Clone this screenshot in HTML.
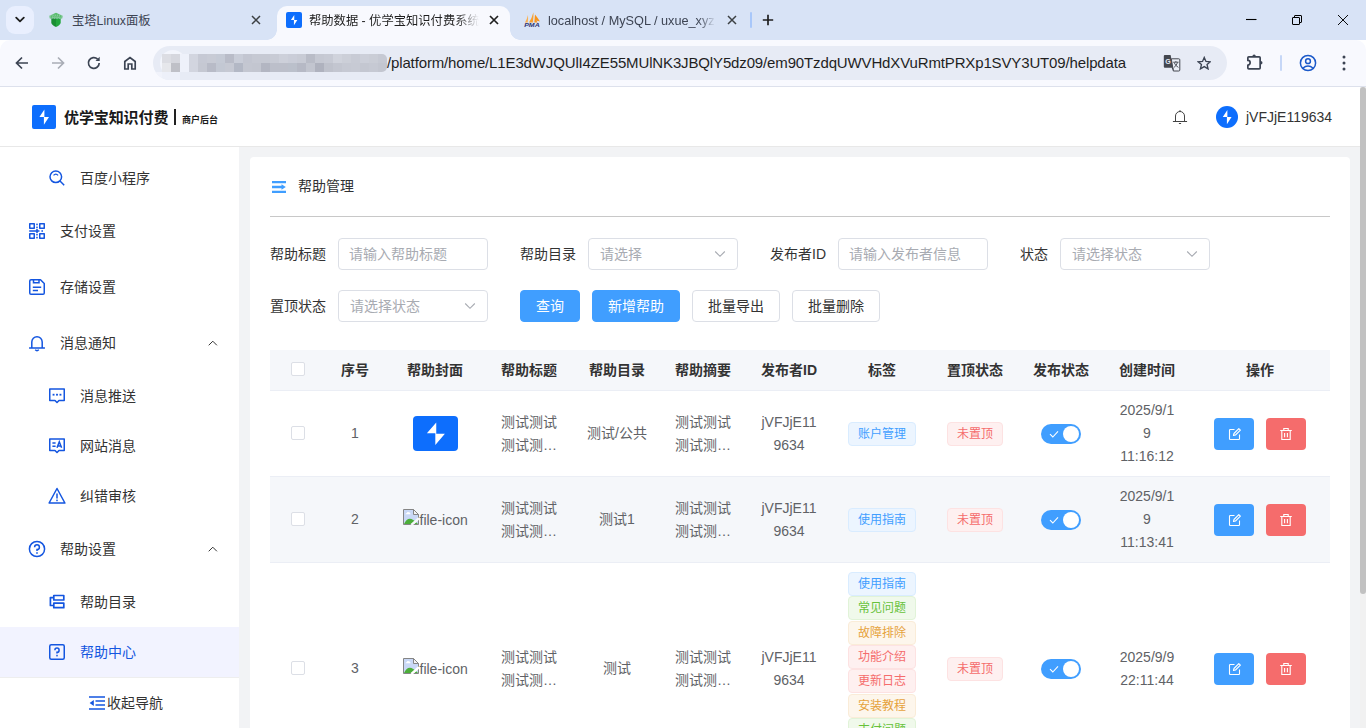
<!DOCTYPE html>
<html lang="zh-CN">
<head>
<meta charset="utf-8">
<title>帮助数据 - 优学宝知识付费系统</title>
<style>
*{box-sizing:border-box;margin:0;padding:0}
html,body{width:1366px;height:728px;overflow:hidden;background:#fff}
body{font-family:"Liberation Sans","Noto Sans CJK SC",sans-serif;font-size:14px;color:#333;position:relative}
.abs{position:absolute}
svg{display:block}

/* ---------- browser chrome ---------- */
#tabbar{position:absolute;left:0;top:0;width:1366px;height:40px;background:#d8e3f6}
#toolbar{position:absolute;left:0;top:40px;width:1366px;height:47px;z-index:2;background:#f8f9fe;border-bottom:1px solid #dde1ec;border-radius:10px 10px 0 0}
.tabtxt{position:absolute;top:12px;font-size:12.3px;line-height:18px;color:#1f1f1f;white-space:nowrap;overflow:hidden}
#tsearch{position:absolute;left:6px;top:6px;width:28px;height:28px;border-radius:9px;background:#e9effe}
#acttab{position:absolute;left:277px;top:6px;width:233px;height:34px;background:#f8f9fe;border-radius:10px 10px 0 0}
#acttab:before,#acttab:after{content:"";position:absolute;bottom:0;width:10px;height:10px}
#acttab:before{left:-10px;background:radial-gradient(circle at 0 0,rgba(0,0,0,0) 9.5px,#f8f9fe 10px)}
#acttab:after{right:-10px;background:radial-gradient(circle at 100% 0,rgba(0,0,0,0) 9.5px,#f8f9fe 10px)}
#omni{position:absolute;left:153px;top:6px;width:1074px;height:34px;border-radius:17px;background:#e7ebf5;overflow:hidden}
#url{position:absolute;left:234px;top:7px;font-size:15px;line-height:20px;color:#1f1f1f;white-space:nowrap;letter-spacing:-0.14px}

/* ---------- page ---------- */
#page{position:absolute;left:0;top:86px;width:1360px;height:642px;background:#f2f3f5;overflow:hidden}
#vscroll{position:absolute;left:1360px;top:86px;width:6px;height:642px;background:#f1f1f1}
#vthumb{position:absolute;left:0;top:1px;width:6px;height:507px;background:#c1c1c1;border-radius:3px}
#header{position:absolute;left:0;top:0;width:1360px;height:61px;background:#fff;border-bottom:1px solid #e8e8e8}
#sidebar{position:absolute;left:0;top:61px;width:239px;height:581px;background:#fff}
.mi{position:absolute;left:0;width:239px;height:50px;font-size:14px;color:#333}
.mi span{position:absolute;top:15px;line-height:20px;white-space:nowrap}
.mi svg{position:absolute}
#card{position:absolute;left:250px;top:71px;width:1100px;height:600px;background:#fff;border-radius:4px}
</style>
</head>
<body>
<div id="tabbar">
  <div id="tsearch"><svg class="abs" style="left:9px;top:10px" width="10" height="8" viewBox="0 0 10 8"><path d="M1.2 1.6 L5 5.4 L8.8 1.6" fill="none" stroke="#1f1f1f" stroke-width="1.8" stroke-linecap="round" stroke-linejoin="round"/></svg></div>
  <!-- tab 1 -->
  <svg class="abs" style="left:48px;top:12px" width="16" height="16" viewBox="0 0 16 16"><path d="M8 0.800 L14.600 3.800 L14.200 6.400 H1.800 L1.400 3.800Z" fill="#58bd6b"/><path d="M2.200 3.200 H13.800 M1.800 5 H14.200" stroke="#d8e3f6" stroke-width="0.500" stroke-dasharray="1.300 0.900" fill="none"/><path d="M3.300 6 H8 V15 Q3.300 12.800 3.300 10.500Z" fill="#1a8f33"/><path d="M8 6 H12.700 V10.500 Q12.700 12.800 8 15Z" fill="#22a73d"/><path d="M3.300 6.600 L4.100 5.800 L4.900 6.600 L5.700 5.800 L6.500 6.600 L7.300 5.800 L8.100 6.600 L8.900 5.800 L9.700 6.600 L10.500 5.800 L11.300 6.600 L12.100 5.800 L12.700 6.600" stroke="#d8e3f6" stroke-width="0.600" fill="none"/></svg>
  <div class="tabtxt" style="left:72px;color:#3d4453">宝塔Linux面板</div>
  <svg class="abs" style="left:251px;top:15px" width="10" height="10" viewBox="0 0 10 10"><path d="M1 1 L9 9 M9 1 L1 9" stroke="#3c4043" stroke-width="1.500" fill="none"/></svg>
  <!-- active tab -->
  <div id="acttab">
    <div class="abs" style="left:9px;top:6px;width:16px;height:16px;border-radius:2px;background:#0d6efd"><svg width="16" height="16" viewBox="0 0 24 24"><path d="M12.400 4.400 L7.400 11.900 H11.900 V19.800 L17 12.100 H12.400Z" fill="#fff"/></svg></div>
    <div class="tabtxt" style="left:32px;top:6px;width:170px;-webkit-mask-image:linear-gradient(90deg,#000 148px,rgba(0,0,0,0) 170px)">帮助数据 - 优学宝知识付费系统</div>
    <svg class="abs" style="left:212px;top:9px" width="10" height="10" viewBox="0 0 10 10"><path d="M1 1 L9 9 M9 1 L1 9" stroke="#1f1f1f" stroke-width="1.700" fill="none"/></svg>
  </div>
  <!-- tab 3 -->
  <svg class="abs" style="left:523px;top:12px" width="18" height="16" viewBox="0 0 18 16"><path d="M5 3 Q4 7 2 10.600 H4.700 Q5.300 6.500 5 3Z" fill="#fbb04f"/><path d="M10.400 0.300 Q9 6 6 10.600 H9.800 Q10.600 5 10.400 0.300Z" fill="#f9a02e"/><path d="M10.900 1.200 V10.600 H11.300 Q11.200 5 10.900 1.200Z" fill="#fbb04f"/><path d="M12 2.500 Q11.800 7 11.400 10.600 H14.600 Q13.800 9.200 13.200 8.600 Q15 9 17 9.600 Q14.500 5.500 12 2.500Z" fill="#f8931a"/><text x="1.200" y="15.100" font-family="Liberation Sans,sans-serif" font-size="6" font-weight="bold" font-style="italic" textLength="15.500" lengthAdjust="spacingAndGlyphs" fill="#2f3572">PMA</text></svg>
  <div class="tabtxt" style="left:548px;color:#3d4453;font-size:12.7px;width:168px;-webkit-mask-image:linear-gradient(90deg,#000 150px,rgba(0,0,0,0) 168px)">localhost / MySQL / uxue_xyz</div>
  <svg class="abs" style="left:727px;top:15px" width="10" height="10" viewBox="0 0 10 10"><path d="M1 1 L9 9 M9 1 L1 9" stroke="#3c4043" stroke-width="1.500" fill="none"/></svg>
  <div class="abs" style="left:750px;top:12px;width:2px;height:16px;background:#a8c7fa;border-radius:1px"></div>
  <svg class="abs" style="left:762px;top:14px" width="12" height="12" viewBox="0 0 12 12"><path d="M6 0.800 V11.200 M0.800 6 H11.200" stroke="#1f1f1f" stroke-width="1.700" fill="none"/></svg>
  <!-- window controls -->
  <svg class="abs" style="left:1246px;top:14px" width="12" height="12" viewBox="0 0 12 12"><path d="M0 5.500 H10.500" stroke="#000" stroke-width="1.100" fill="none"/></svg>
  <svg class="abs" style="left:1291px;top:14px" width="12" height="12" viewBox="0 0 12 12"><rect x="1.500" y="3.500" width="7" height="7" rx="0.400" fill="none" stroke="#000" stroke-width="1"/><path d="M3.500 3.400 V2 Q3.500 1.500 4 1.500 H10 Q10.500 1.500 10.500 2 V8 Q10.500 8.500 10 8.500 H8.600" fill="none" stroke="#000" stroke-width="1"/></svg>
  <svg class="abs" style="left:1337px;top:14px" width="12" height="12" viewBox="0 0 12 12"><path d="M1 1 L11 11 M11 1 L1 11" stroke="#000" stroke-width="0.950" fill="none"/></svg>
</div>

<div id="toolbar">
  <svg class="abs" style="left:14px;top:15px" width="16" height="16" viewBox="0 0 16 16"><path d="M14 8 H3 M8 2.500 L2.500 8 L8 13.500" fill="none" stroke="#3c4453" stroke-width="1.700"/></svg>
  <svg class="abs" style="left:50px;top:15px" width="16" height="16" viewBox="0 0 16 16"><path d="M2 8 H13 M8 2.500 L13.500 8 L8 13.500" fill="none" stroke="#a9adb6" stroke-width="1.700"/></svg>
  <svg class="abs" style="left:86px;top:15px" width="16" height="16" viewBox="0 0 16 16"><path d="M13.200 8 A5.400 5.400 0 1 1 11.600 4.100" fill="none" stroke="#3c4453" stroke-width="1.700"/><path d="M13.700 1.800 V6 H9.500Z" fill="#3c4453"/></svg>
  <svg class="abs" style="left:122px;top:15px" width="16" height="16" viewBox="0 0 16 16"><path d="M2.800 14 V6.500 L8 2.500 L13.200 6.500 V14 H9.800 V9 H6.200 V14Z" fill="none" stroke="#3c4453" stroke-width="1.700" stroke-linejoin="miter"/></svg>
  <div id="omni">
    <div class="abs" style="left:7px;top:4px;width:26px;height:26px;border-radius:13px;background:#f3f5fc"></div><div class="abs" style="left:0;top:26px;width:9px;height:9px;background:#f1f3fb"></div><div class="abs" style="left:9px;top:26px;width:18px;height:9px;background:#edf0f9"></div><div class="abs" style="left:27px;top:26px;width:9px;height:9px;background:#e7ebf5"></div><div class="abs" style="left:9px;top:8px;width:225px;height:18px;border-radius:0 5px 5px 0;overflow:hidden"><div style="height:9px;background:linear-gradient(90deg,#dcdde3 0px 9px,#d6d7de 9px 18px,#eef1fa 18px 27px,#d2d5df 27px 36px,#c6c9d4 36px 45px,#c8cbd5 45px 54px,#c5cad5 54px 63px,#b9bcc8 63px 72px,#c9cdd8 72px 81px,#c3c6d1 81px 90px,#c6c9d3 90px 99px,#c6c9d3 99px 108px,#c8cbd5 108px 117px,#cdd0da 117px 126px,#cacdd8 126px 135px,#c8cbd5 135px 144px,#b9bcc7 144px 153px,#c5c8d2 153px 162px,#c7cad4 162px 171px,#d0d3dc 171px 180px,#cccfd8 180px 189px,#c8cbd5 189px 198px,#cccfd9 198px 207px,#cacdd6 207px 216px,#c6c9d3 216px 225px)"></div><div style="height:9px;background:linear-gradient(90deg,#e6e7eb 0px 9px,#bfc0c7 9px 18px,#eef1fa 18px 27px,#d2d5df 27px 36px,#c5c8d2 36px 45px,#b8bbc7 45px 54px,#c3c8d3 54px 63px,#c6c9d3 63px 72px,#b3b8c5 72px 81px,#c4c7d1 81px 90px,#c3c6d0 90px 99px,#b3b6c2 99px 108px,#bcbfca 108px 117px,#bcbfca 117px 126px,#bbc0cb 126px 135px,#b6b9c5 135px 144px,#c2c5cf 144px 153px,#afb2be 153px 162px,#bfc2cc 162px 171px,#c3c6d0 171px 180px,#c6c9d3 180px 189px,#c7cad4 189px 198px,#c4c7d1 198px 207px,#c6c9d3 207px 216px,#c3c6d0 216px 225px)"></div></div>
    <div id="url">/platform/home/L1E3dWJQUlI4ZE55MUlNK3JBQlY5dz09/em90TzdqUWVHdXVuRmtPRXp1SVY3UT09/helpdata</div>
    <!-- translate icon -->
    <svg class="abs" style="left:1010px;top:8px" width="18" height="18" viewBox="0 0 18 18"><path d="M0.800 2 Q0.800 1 1.800 1 H7.600 L10.200 13.800 H1.800 Q0.800 13.800 0.800 12.800Z" fill="#44474f"/><path d="M8.300 4.800 H15.800 Q16.800 4.800 16.800 5.800 V16 Q16.800 17 15.800 17 H10.300Z" fill="#eceff7" stroke="#44474f" stroke-width="1"/><path d="M8.600 13.800 L10.600 17 L10.300 13.800Z" fill="#44474f"/><text x="5" y="10" font-family="Liberation Sans,sans-serif" font-size="7" font-weight="bold" text-anchor="middle" fill="#e4e8f3">G</text><path d="M10.300 8.200 H15.600 M12.900 7 V8.200 M11 8.400 Q12.400 11.800 15.400 13.400 M14.600 8.400 Q13.400 11.800 10.800 13.600" stroke="#44474f" stroke-width="0.900" fill="none"/></svg>
    <!-- star -->
    <svg class="abs" style="left:1043.800px;top:9.800px" width="14.500" height="14.500" viewBox="0 0 16 16"><path d="M8 1.600 L9.900 6 L14.700 6.400 L11.100 9.500 L12.200 14.200 L8 11.700 L3.800 14.200 L4.900 9.500 L1.300 6.400 L6.100 6Z" fill="none" stroke="#3c4453" stroke-width="1.500" stroke-linejoin="miter"/></svg>
  </div>
  <!-- extensions -->
  <svg class="abs" style="left:1246px;top:13px" width="18" height="18" viewBox="0 0 18 18"><path d="M1.850 4.800 Q1.850 3.850 2.800 3.850 H13.200 Q14.150 3.850 14.150 4.800 V14.900 Q14.150 15.850 13.200 15.850 H2.800 Q1.850 15.850 1.850 14.900 V12 A2.300 2.300 0 0 0 1.850 7.400Z" fill="none" stroke="#3c4453" stroke-width="1.700" stroke-linejoin="round"/><path d="M6.400 3.200 A1.700 1.700 0 0 1 9.800 3.200Z M14.800 8.100 A1.700 1.700 0 0 1 14.800 11.500Z" fill="#3c4453"/></svg>
  <div class="abs" style="left:1280px;top:15px;width:2px;height:16px;background:#c6d7f7;border-radius:1px"></div>
  <!-- profile -->
  <svg class="abs" style="left:1299px;top:14px" width="18" height="18" viewBox="0 0 18 18"><circle cx="9" cy="9" r="7.600" fill="none" stroke="#1b59c9" stroke-width="1.500"/><circle cx="9" cy="7.200" r="2.400" fill="none" stroke="#1b59c9" stroke-width="1.500"/><path d="M3.800 14.300 Q9 9.800 14.200 14.300" fill="none" stroke="#1b59c9" stroke-width="1.500"/></svg>
  <svg class="abs" style="left:1341px;top:14px" width="6" height="18" viewBox="0 0 6 18"><circle cx="3" cy="3" r="1.500" fill="#3c4453"/><circle cx="3" cy="9" r="1.500" fill="#3c4453"/><circle cx="3" cy="15" r="1.500" fill="#3c4453"/></svg>
</div>

<div id="page">
<div id="header">
  <div class="abs" style="left:32px;top:19px;width:24px;height:24px;border-radius:2px;background:#0d6efd"><svg width="24" height="24" viewBox="0 0 24 24"><path d="M12.400 4.400 L7.400 11.900 H11.900 V19.800 L17 12.100 H12.400Z" fill="#fff"/></svg></div>
  <div class="abs" style="left:64px;top:21px;font-size:15px;line-height:22px;font-weight:bold;color:#1a1a1a;white-space:nowrap;letter-spacing:-0.1px">优学宝知识付费</div>
  <div class="abs" style="left:174px;top:23px;width:2px;height:16px;background:#222"></div>
  <div class="abs" style="left:182px;top:28px;font-size:9px;line-height:12px;font-weight:bold;color:#1a1a1a;white-space:nowrap">商户后台</div>
  <svg class="abs" style="left:1172px;top:23px" width="16" height="16" viewBox="0 0 16 16"><path d="M1.300 12.500 H14.700 M3.500 12.500 V7 A4.500 4.500 0 0 1 12.500 7 V12.500 M7.300 14.500 H8.700" fill="none" stroke="#444" stroke-width="1" stroke-linecap="round"/><circle cx="8" cy="2" r="0.800" fill="#444"/></svg>
  <div class="abs" style="left:1216px;top:20px;width:22px;height:22px;border-radius:11px;background:#0d6efd"><svg width="22" height="22" viewBox="0 0 24 24"><path d="M12.400 4.400 L7.400 11.900 H11.900 V19.800 L17 12.100 H12.400Z" fill="#fff"/></svg></div>
  <div class="abs" style="left:1246px;top:21px;font-size:14px;line-height:20px;color:#333;white-space:nowrap">jVFJjE119634</div>
</div>

<div id="sidebar">
  <div class="mi" style="top:6px"><svg style="left:49px;top:17px" width="16" height="16" viewBox="0 0 16 16"><circle cx="6.800" cy="6.800" r="5.800" fill="none" stroke="#1456e0" stroke-width="1.500"/><path d="M11 11 L15.200 15.200" stroke="#1456e0" stroke-width="1.500" fill="none"/><path d="M4.500 5.400 Q6.800 2.800 9.100 5.400" stroke="#1456e0" stroke-width="1.300" fill="none"/></svg><span style="left:80px">百度小程序</span></div>
  <div class="mi" style="top:56px;height:56px"><svg style="left:29px;top:20px" width="16" height="16" viewBox="0 0 16 16"><g fill="none" stroke="#1456e0" stroke-width="1.500" stroke-linejoin="round"><rect x="0.750" y="0.750" width="4.500" height="4.500"/><rect x="10.750" y="0.750" width="4.500" height="4.500"/><rect x="0.750" y="10.750" width="4.500" height="4.500"/><rect x="10.750" y="10.750" width="4.500" height="4.500"/></g><g fill="#1456e0"><rect x="7.250" y="0.600" width="1.500" height="1.600"/><rect x="7.250" y="3.600" width="1.500" height="1.600"/><rect x="0.200" y="7.250" width="10.300" height="1.500"/><rect x="7.250" y="6" width="1.500" height="4"/><rect x="12.400" y="7.250" width="1.600" height="1.500"/><rect x="7.250" y="10.800" width="1.500" height="1.600"/><rect x="7.250" y="13.800" width="1.500" height="1.600"/></g></svg><span style="left:60px;top:18px">支付设置</span></div>
  <div class="mi" style="top:112px;height:56px"><svg style="left:29px;top:20px" width="16" height="16" viewBox="0 0 16 16"><path d="M0.750 2 Q0.750 0.750 2 0.750 H11.500 L15.250 4.500 V14 Q15.250 15.250 14 15.250 H2 Q0.750 15.250 0.750 14Z" fill="none" stroke="#1456e0" stroke-width="1.500" stroke-linejoin="round"/><path d="M4.500 0.750 V3.700 H10 V0.750" fill="none" stroke="#1456e0" stroke-width="1.500"/><path d="M3.800 8.200 H12.200 M3.800 11.500 H9" stroke="#1456e0" stroke-width="1.500" fill="none"/></svg><span style="left:60px;top:18px">存储设置</span></div>
  <div class="mi" style="top:168px;height:56px"><svg style="left:29px;top:20px" width="16" height="17" viewBox="0 0 16 17"><path d="M0.500 13 H15.500 M2.800 13 V7 A5.200 5.200 0 0 1 13.200 7 V13" fill="none" stroke="#1456e0" stroke-width="1.500" stroke-linecap="round"/><path d="M6.200 14.800 Q8 16.600 9.800 14.800" fill="none" stroke="#1456e0" stroke-width="1.400"/></svg><span style="left:60px;top:18px">消息通知</span><svg style="left:207px;top:24px" width="11" height="8" viewBox="0 0 11 8"><path d="M1.700 6.300 L5.800 2.200 L9.900 6.300" fill="none" stroke="#333" stroke-width="1"/></svg></div>
  <div class="mi" style="top:224px"><svg style="left:49px;top:17px" width="16" height="16" viewBox="0 0 16 16"><path d="M0.750 1 H15.250 V12.400 H10 L8 14.500 L6 12.400 H0.750Z" fill="none" stroke="#1456e0" stroke-width="1.500" stroke-linejoin="round"/><g fill="#1456e0"><rect x="3.600" y="5.800" width="1.900" height="1.800"/><rect x="7.050" y="5.800" width="1.900" height="1.800"/><rect x="10.500" y="5.800" width="1.900" height="1.800"/></g></svg><span style="left:80px">消息推送</span></div>
  <div class="mi" style="top:274px"><svg style="left:49px;top:17px" width="16" height="16" viewBox="0 0 16 16"><path d="M0.750 1 H15.250 V12.400 H10 L8 14.500 L6 12.400 H0.750Z" fill="none" stroke="#1456e0" stroke-width="1.500" stroke-linejoin="round"/><path d="M8 9.800 L10.300 3.800 L12.600 9.800 M8.800 8 H11.800" fill="none" stroke="#1456e0" stroke-width="1.500"/><path d="M3.400 5 H6.600 M3.400 8.200 H6.600" stroke="#1456e0" stroke-width="1.500" fill="none"/></svg><span style="left:80px">网站消息</span></div>
  <div class="mi" style="top:324px"><svg style="left:48px;top:16px" width="18" height="18" viewBox="0 0 18 18"><path d="M9 1.500 L16.900 16 H1.100Z" fill="none" stroke="#1456e0" stroke-width="1.500" stroke-linejoin="round"/><path d="M9 6.400 V11.400" stroke="#1456e0" stroke-width="1.500" fill="none"/><rect x="8.250" y="12.600" width="1.500" height="1.600" fill="#1456e0"/></svg><span style="left:80px">纠错审核</span></div>
  <div class="mi" style="top:374px;height:56px"><svg style="left:28px;top:19px" width="18" height="18" viewBox="0 0 18 18"><circle cx="9" cy="9" r="7.600" fill="none" stroke="#1456e0" stroke-width="1.500"/><path d="M6.600 7.200 A2.400 2.400 0 1 1 9 9.600 V11" fill="none" stroke="#1456e0" stroke-width="1.500"/><rect x="8.250" y="12.200" width="1.500" height="1.600" fill="#1456e0"/></svg><span style="left:60px;top:18px">帮助设置</span><svg style="left:207px;top:24px" width="11" height="8" viewBox="0 0 11 8"><path d="M1.700 6.300 L5.800 2.200 L9.900 6.300" fill="none" stroke="#333" stroke-width="1"/></svg></div>
  <div class="mi" style="top:430px"><svg style="left:49px;top:17px" width="16" height="16" viewBox="0 0 16 16"><path d="M4.800 1.500 H14.800 V6 H4.800Z M4.800 9.200 H14.800 V13.700 H4.800Z" fill="none" stroke="#1456e0" stroke-width="1.700" stroke-linejoin="round"/><path d="M4.800 3.600 H1.400 V11.500 H4.800" fill="none" stroke="#1456e0" stroke-width="1.700" stroke-linejoin="round"/></svg><span style="left:80px">帮助目录</span></div>
  <div class="mi" style="top:480px;background:#f2f3ff;color:#1456e0"><svg style="left:49px;top:17px" width="16" height="16" viewBox="0 0 16 16"><rect x="0.750" y="0.750" width="14.500" height="14.500" rx="1.500" fill="none" stroke="#1456e0" stroke-width="1.500"/><path d="M5.900 6.200 A2.100 2.100 0 1 1 8 8.300 V9.600" fill="none" stroke="#1456e0" stroke-width="1.500"/><rect x="7.250" y="10.800" width="1.500" height="1.600" fill="#1456e0"/></svg><span style="left:80px">帮助中心</span></div>
  <div class="abs" style="left:0;top:530px;width:239px;height:51px;background:#fff;border-top:1px solid #eee"><svg class="abs" style="left:89px;top:18px" width="16" height="14" viewBox="0 0 16 14"><path d="M0 1 H16 M6.500 5 H16 M6.500 9 H16 M0 13 H16" stroke="#1456e0" stroke-width="1.600" fill="none"/><path d="M4.800 4 V10 L0.600 7Z" fill="#1456e0"/></svg><span class="abs" style="left:107px;top:15px;line-height:20px;font-size:14px;color:#333;white-space:nowrap">收起导航</span></div>
</div>

<style>
#card .lbl{position:absolute;font-size:14px;line-height:20px;color:#333;white-space:nowrap}
#card .inp{position:absolute;width:150px;height:32px;border:1px solid #dcdfe6;border-radius:4px;background:#fff;font-size:14px;line-height:30px;color:#a8abb2;padding-left:11px;white-space:nowrap}
#card .inp svg{position:absolute;right:11px;top:11px}
#card .btn{position:absolute;height:32px;border-radius:4px;font-size:14px;line-height:30px;text-align:center;white-space:nowrap}
#card .bp{background:#409eff;border:1px solid #409eff;color:#fff}
#card .bd{background:#fff;border:1px solid #dcdfe6;color:#333}
#tbl{position:absolute;left:20px;top:193px;width:1060px;height:420px;overflow:hidden}
#tbl .th{position:absolute;top:10px;font-size:14px;line-height:20px;font-weight:bold;color:#333;white-space:nowrap;transform:translateX(-50%)}
#tbl .row{position:absolute;left:0;width:1060px;border-bottom:1px solid #ebeef5}
#tbl .c{position:absolute;font-size:14px;line-height:23px;color:#606266;white-space:nowrap;text-align:center;transform:translateX(-50%)}
#tbl .cb{position:absolute;left:21px;width:14px;height:14px;border:1px solid #dcdfe6;border-radius:2px;background:#fff}
#tbl .tag{position:absolute;height:24px;border-radius:4px;font-size:12px;line-height:22px;padding:0 9px;white-space:nowrap;border:1px solid}
.t-p{background:#ecf5ff;border-color:#d9ecff!important;color:#409eff}
.t-s{background:#f0f9eb;border-color:#e1f3d8!important;color:#67c23a}
.t-w{background:#fdf6ec;border-color:#faecd8!important;color:#e6a23c}
.t-d{background:#fef0f0;border-color:#fde2e2!important;color:#f56c6c}
#tbl .sw{position:absolute;left:771px;width:40px;height:20px;border-radius:10px;background:#409eff}
#tbl .sw i{position:absolute;left:22px;top:2px;width:16px;height:16px;border-radius:8px;background:#fff}
#tbl .sw svg{position:absolute;left:8px;top:5px}
#tbl .ab{position:absolute;width:40px;height:32px;border-radius:4px}
#tbl .ab svg{position:absolute;left:13px;top:9px}
#tbl .broken{position:absolute;left:133px;font-size:14px;line-height:16px;color:#606266;white-space:nowrap}
#tbl .broken svg{position:absolute;left:0;top:0}
#tbl .broken span{padding-left:16.5px;position:relative;top:3px}
</style>
<div id="card">
<svg class="abs" style="left:22px;top:24px" width="14" height="12" viewBox="0 0 14 12"><path d="M0 1.150 H14 M0 6 H10 M0 10.850 H14" stroke="#409eff" stroke-width="2.300" fill="none"/><path d="M9.500 3.300 L13.800 6 L9.500 8.700Z" fill="#409eff"/></svg>
<div class="lbl" style="left:48px;top:19px;color:#303133">帮助管理</div>
<div class="abs" style="left:20px;top:59px;width:1060px;height:1px;background:#c8c8c8"></div>
<div class="lbl" style="left:20px;top:87px">帮助标题</div>
<div class="inp" style="left:88px;top:81px;padding-left:10px">请输入帮助标题</div>
<div class="lbl" style="left:270px;top:87px">帮助目录</div>
<div class="inp" style="left:338px;top:81px">请选择<svg width="12" height="8" viewBox="0 0 12 8"><path d="M1.200 1.500 L6 6.300 L10.800 1.500" fill="none" stroke="#a8abb2" stroke-width="1.100"/></svg></div>
<div class="lbl" style="left:520px;top:87px">发布者ID</div>
<div class="inp" style="left:588px;top:81px;padding-left:10px">请输入发布者信息</div>
<div class="lbl" style="left:770px;top:87px">状态</div>
<div class="inp" style="left:810px;top:81px">请选择状态<svg width="12" height="8" viewBox="0 0 12 8"><path d="M1.200 1.500 L6 6.300 L10.800 1.500" fill="none" stroke="#a8abb2" stroke-width="1.100"/></svg></div>
<div class="lbl" style="left:20px;top:139px">置顶状态</div>
<div class="inp" style="left:88px;top:133px">请选择状态<svg width="12" height="8" viewBox="0 0 12 8"><path d="M1.200 1.500 L6 6.300 L10.800 1.500" fill="none" stroke="#a8abb2" stroke-width="1.100"/></svg></div>
<div class="btn bp" style="left:270px;top:133px;width:60px">查询</div>
<div class="btn bp" style="left:342px;top:133px;width:88px">新增帮助</div>
<div class="btn bd" style="left:442px;top:133px;width:88px">批量导出</div>
<div class="btn bd" style="left:542px;top:133px;width:88px">批量删除</div>
<div id="tbl">
<div class="row" style="top:0;height:41px;background:#f5f7fa"></div>
<div class="cb" style="top:12px"></div>
<div class="th" style="left:85px">序号</div>
<div class="th" style="left:165px">帮助封面</div>
<div class="th" style="left:259px">帮助标题</div>
<div class="th" style="left:347px">帮助目录</div>
<div class="th" style="left:433px">帮助摘要</div>
<div class="th" style="left:519px">发布者ID</div>
<div class="th" style="left:612px">标签</div>
<div class="th" style="left:705px">置顶状态</div>
<div class="th" style="left:791px">发布状态</div>
<div class="th" style="left:877px">创建时间</div>
<div class="th" style="left:990px">操作</div>
<div class="row" style="top:41px;height:86px;background:#fff"></div>
<div class="cb" style="top:76px"></div>
<div class="c" style="left:85px;top:72px">1</div>
<div class="abs" style="left:143px;top:66px;width:45px;height:35px;border-radius:4px;background:#0d6efd"><svg width="45" height="35" viewBox="0 0 24 24" preserveAspectRatio="none"><path d="M12.400 4.400 L7.400 11.900 H11.900 V19.800 L17 12.100 H12.400Z" fill="#fff"/></svg></div>
<div class="c" style="left:259px;top:61px;text-align:left">测试测试<br>测试测…</div>
<div class="c" style="left:347px;top:72px">测试/公共</div>
<div class="c" style="left:433px;top:61px;text-align:left">测试测试<br>测试测…</div>
<div class="c" style="left:519px;top:61px">jVFJjE11<br>9634</div>
<div class="tag t-p" style="left:578px;top:72px">账户管理</div>
<div class="tag t-d" style="left:677px;top:72px">未置顶</div>
<div class="sw" style="top:74px"><svg width="10" height="10" viewBox="0 0 10 10"><path d="M1 5.200 L3.800 8 L9 2.400" fill="none" stroke="#fff" stroke-width="1.100"/></svg><i></i></div>
<div class="c" style="left:877px;top:49px">2025/9/1<br>9<br>11:16:12</div>
<div class="ab" style="left:944px;top:68px;background:#409eff"><svg style="left:14px" width="14" height="14" viewBox="0 0 14 14"><path d="M11.500 7.500 V11.800 Q11.500 12.500 10.800 12.500 H2.200 Q1.500 12.500 1.500 11.800 V3.200 Q1.500 2.500 2.200 2.500 H6.500" fill="none" stroke="#fff" stroke-width="1.100"/><path d="M5.500 8.500 L6 6.500 L10.800 1.600 L12.400 3.200 L7.500 8 Z" fill="none" stroke="#fff" stroke-width="1.100" stroke-linejoin="round"/></svg></div>
<div class="ab" style="left:996px;top:68px;background:#f56c6c"><svg width="14" height="14" viewBox="0 0 14 14"><path d="M1.200 3.500 H12.800 M4.800 3.300 V1.500 H9.200 V3.300 M2.800 3.500 V12.500 H11.200 V3.500 M5.600 6 V10.200 M8.400 6 V10.200" fill="none" stroke="#fff" stroke-width="1.100"/></svg></div>
<div class="row" style="top:127px;height:86px;background:#f5f7fa"></div>
<div class="cb" style="top:162px"></div>
<div class="c" style="left:85px;top:158px">2</div>
<div class="broken" style="top:159px"><svg width="16" height="16" viewBox="0 0 16 16"><path d="M0.500 0.500 H10.500 L15.500 5.500 V15.500 H0.500Z" fill="#c9d8f6"/><path d="M2.500 5.200 Q2.500 4.200 3.600 4.200 Q4.200 2.800 5.600 3.200 Q7.300 3 7.600 5.200Z" fill="#fff"/><path d="M1 15 Q4 8.500 8.500 10 Q12 11.500 15 15Z" fill="#4cae3a"/><path d="M6.500 16 L16 7.600 V10.600 L10 16Z" fill="#f5f7fa"/><path d="M0.500 0.500 H10.500 L15.500 5.500 V15.500 H0.500Z" fill="none" stroke="#858585" stroke-width="1"/><path d="M10.500 0.500 V5.500 H15.500Z" fill="#f4f4f4" stroke="#858585" stroke-width="1" stroke-linejoin="round"/><path d="M6.800 16.500 L16.500 7.800 V10.200 L9.600 16.500Z" fill="#f5f7fa"/></svg><span>file-icon</span></div>
<div class="c" style="left:259px;top:147px;text-align:left">测试测试<br>测试测…</div>
<div class="c" style="left:347px;top:158px">测试1</div>
<div class="c" style="left:433px;top:147px;text-align:left">测试测试<br>测试测…</div>
<div class="c" style="left:519px;top:147px">jVFJjE11<br>9634</div>
<div class="tag t-p" style="left:578px;top:158px">使用指南</div>
<div class="tag t-d" style="left:677px;top:158px">未置顶</div>
<div class="sw" style="top:160px"><svg width="10" height="10" viewBox="0 0 10 10"><path d="M1 5.200 L3.800 8 L9 2.400" fill="none" stroke="#fff" stroke-width="1.100"/></svg><i></i></div>
<div class="c" style="left:877px;top:135px">2025/9/1<br>9<br>11:13:41</div>
<div class="ab" style="left:944px;top:154px;background:#409eff"><svg style="left:14px" width="14" height="14" viewBox="0 0 14 14"><path d="M11.500 7.500 V11.800 Q11.500 12.500 10.800 12.500 H2.200 Q1.500 12.500 1.500 11.800 V3.200 Q1.500 2.500 2.200 2.500 H6.500" fill="none" stroke="#fff" stroke-width="1.100"/><path d="M5.500 8.500 L6 6.500 L10.800 1.600 L12.400 3.200 L7.500 8 Z" fill="none" stroke="#fff" stroke-width="1.100" stroke-linejoin="round"/></svg></div>
<div class="ab" style="left:996px;top:154px;background:#f56c6c"><svg width="14" height="14" viewBox="0 0 14 14"><path d="M1.200 3.500 H12.800 M4.800 3.300 V1.500 H9.200 V3.300 M2.800 3.500 V12.500 H11.200 V3.500 M5.600 6 V10.200 M8.400 6 V10.200" fill="none" stroke="#fff" stroke-width="1.100"/></svg></div>
<div class="row" style="top:213px;height:211px;background:#fff"></div>
<div class="cb" style="top:311px"></div>
<div class="c" style="left:85px;top:307px">3</div>
<div class="broken" style="top:308px"><svg width="16" height="16" viewBox="0 0 16 16"><path d="M0.500 0.500 H10.500 L15.500 5.500 V15.500 H0.500Z" fill="#c9d8f6"/><path d="M2.500 5.200 Q2.500 4.200 3.600 4.200 Q4.200 2.800 5.600 3.200 Q7.300 3 7.600 5.200Z" fill="#fff"/><path d="M1 15 Q4 8.500 8.500 10 Q12 11.500 15 15Z" fill="#4cae3a"/><path d="M6.500 16 L16 7.600 V10.600 L10 16Z" fill="#fff"/><path d="M0.500 0.500 H10.500 L15.500 5.500 V15.500 H0.500Z" fill="none" stroke="#858585" stroke-width="1"/><path d="M10.500 0.500 V5.500 H15.500Z" fill="#f4f4f4" stroke="#858585" stroke-width="1" stroke-linejoin="round"/><path d="M6.800 16.500 L16.500 7.800 V10.200 L9.600 16.500Z" fill="#fff"/></svg><span>file-icon</span></div>
<div class="c" style="left:259px;top:296px;text-align:left">测试测试<br>测试测…</div>
<div class="c" style="left:347px;top:307px">测试</div>
<div class="c" style="left:433px;top:296px;text-align:left">测试测试<br>测试测…</div>
<div class="c" style="left:519px;top:296px">jVFJjE11<br>9634</div>
<div class="tag t-p" style="left:578px;top:222px">使用指南</div>
<div class="tag t-s" style="left:578px;top:246px">常见问题</div>
<div class="tag t-w" style="left:578px;top:271px">故障排除</div>
<div class="tag t-d" style="left:578px;top:295px">功能介绍</div>
<div class="tag t-d" style="left:578px;top:319px">更新日志</div>
<div class="tag t-w" style="left:578px;top:344px">安装教程</div>
<div class="tag t-s" style="left:578px;top:368px">支付问题</div>
<div class="tag t-d" style="left:677px;top:307px">未置顶</div>
<div class="sw" style="top:309px"><svg width="10" height="10" viewBox="0 0 10 10"><path d="M1 5.200 L3.800 8 L9 2.400" fill="none" stroke="#fff" stroke-width="1.100"/></svg><i></i></div>
<div class="c" style="left:877px;top:296px">2025/9/9<br>22:11:44</div>
<div class="ab" style="left:944px;top:303px;background:#409eff"><svg style="left:14px" width="14" height="14" viewBox="0 0 14 14"><path d="M11.500 7.500 V11.800 Q11.500 12.500 10.800 12.500 H2.200 Q1.500 12.500 1.500 11.800 V3.200 Q1.500 2.500 2.200 2.500 H6.500" fill="none" stroke="#fff" stroke-width="1.100"/><path d="M5.500 8.500 L6 6.500 L10.800 1.600 L12.400 3.200 L7.500 8 Z" fill="none" stroke="#fff" stroke-width="1.100" stroke-linejoin="round"/></svg></div>
<div class="ab" style="left:996px;top:303px;background:#f56c6c"><svg width="14" height="14" viewBox="0 0 14 14"><path d="M1.200 3.500 H12.800 M4.800 3.300 V1.500 H9.200 V3.300 M2.800 3.500 V12.500 H11.200 V3.500 M5.600 6 V10.200 M8.400 6 V10.200" fill="none" stroke="#fff" stroke-width="1.100"/></svg></div>
</div>
</div>

</div>
<div id="vscroll"><div id="vthumb"></div></div>
</body>
</html>
